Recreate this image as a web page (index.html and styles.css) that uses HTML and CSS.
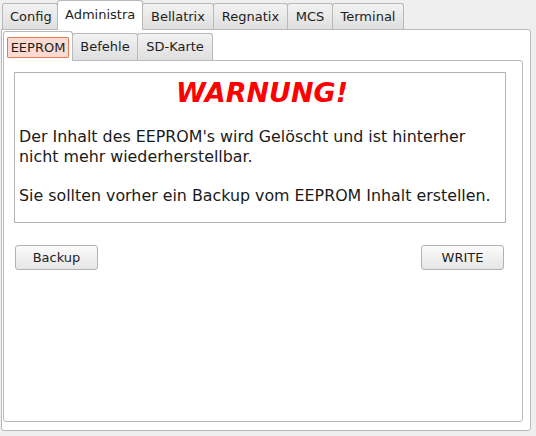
FILE: index.html
```html
<!DOCTYPE html>
<html>
<head>
<meta charset="utf-8">
<link rel="stylesheet" href="styles.css">
</head>
<body>
<div class="win">
  <div class="tabs outer-tabs">
    <div class="tab t-config">Config</div>
    <div class="tab sel t-admin">Administra</div>
    <div class="tab t-bella">Bellatrix</div>
    <div class="tab t-regna">Regnatix</div>
    <div class="tab t-mcs">MCS</div>
    <div class="tab t-term">Terminal</div>
  </div>
  <div class="pane outer-pane">
    <div class="tabs inner-tabs">
      <div class="tab sel t-eeprom"><span class="focus">EEPROM</span></div>
      <div class="tab t-befehle">Befehle</div>
      <div class="tab t-sd">SD-Karte</div>
    </div>
    <div class="pane inner-pane">
      <div class="frame">
        <div class="warn">WARNUNG!</div>
        <p class="msg">Der Inhalt des EEPROM's wird Gelöscht und ist hinterher<br>nicht mehr wiederherstellbar.</p>
        <p class="msg">Sie sollten vorher ein Backup vom EEPROM Inhalt erstellen.</p>
      </div>
      <div class="buttons">
        <button class="btn">Backup</button>
        <button class="btn">WRITE</button>
      </div>
    </div>
  </div>
</div>
</body>
</html>
```
FILE: styles.css
```css
html, body {
  margin: 0;
  padding: 0;
}
body {
  width: 536px;
  height: 436px;
  background: #efefef;
  font-family: "DejaVu Sans", sans-serif;
  font-size: 13px;
  color: #1e1e1e;
  overflow: hidden;
}
.win {
  padding: 1px 0 0 1px;
}
.tabs {
  display: flex;
  align-items: flex-end;
  position: relative;
  z-index: 2;
}
.outer-tabs {
  margin-left: 1px;
  height: 28px;
}
.tab {
  box-sizing: border-box;
  height: 26px;
  line-height: 25px;
  padding: 0 7px;
  border: 1px solid #b9b9b9;
  border-bottom: none;
  border-radius: 3px 3px 0 0;
  background: linear-gradient(#f2f2f2, #dfdfdf);
  white-space: nowrap;
  text-align: center;
}
.tab + .tab {
  margin-left: -1px;
}
.tab.sel {
  height: 30px;
  margin-bottom: -1px;
  background: #fff;
  line-height: 27px;
  position: relative;
  z-index: 2;
}
.t-config { width: 56px; }
.t-admin { width: 86px; }
.t-bella { width: 72px; }
.t-regna { width: 75px; }
.t-mcs { width: 46px; }
.t-term { width: 72px; }
.pane {
  box-sizing: border-box;
  border: 1px solid #b9b9b9;
  background: #fff;
  border-radius: 0 3px 3px 3px;
}
.outer-pane {
  width: 530px;
  height: 402px;
  padding: 1px 7px 9px 1px;
}
.inner-tabs {
  height: 29px;
}
.inner-tabs .tab {
  height: 27px;
  line-height: 25px;
}
.inner-tabs .tab.sel {
  height: 30px;
  padding: 0 3px;
  line-height: 27px;
}
.t-eeprom { width: 70px; }
.t-befehle { width: 66px; }
.t-sd { width: 76px; }
.focus {
  display: inline-block;
  box-sizing: border-box;
  width: 62px;
  height: 21px;
  line-height: 19px;
  margin-top: 5px;
  vertical-align: top;
  border: 1px solid #e87a55;
  background: #fadbd1;
  border-radius: 1px;
}
.inner-pane {
  height: 362px;
  padding: 11px 16px 0 10px;
}
.frame {
  box-sizing: border-box;
  height: 151px;
  border: 1px solid #b4b4b4;
  padding: 4px 0 0 4px;
}
.warn {
  text-align: center;
  color: #ff0000;
  font-weight: bold;
  font-style: italic;
  font-size: 27px;
  line-height: 32px;
}
.msg {
  margin: 18px 0 0 0;
  font-size: 15.85px;
  line-height: 20px;
  color: #1a1a1a;
}
.frame .msg + .msg {
  margin-top: 19px;
}
.buttons {
  display: flex;
  justify-content: space-between;
  margin-top: 22px;
  padding: 0 2px 0 1px;
}
.btn {
  box-sizing: border-box;
  width: 83px;
  height: 25px;
  padding: 0;
  border: 1px solid #b2b2b2;
  border-radius: 3px;
  background: linear-gradient(#fbfbfb, #e6e6e6);
  font-family: "DejaVu Sans", sans-serif;
  font-size: 13px;
  color: #1e1e1e;
}
```
